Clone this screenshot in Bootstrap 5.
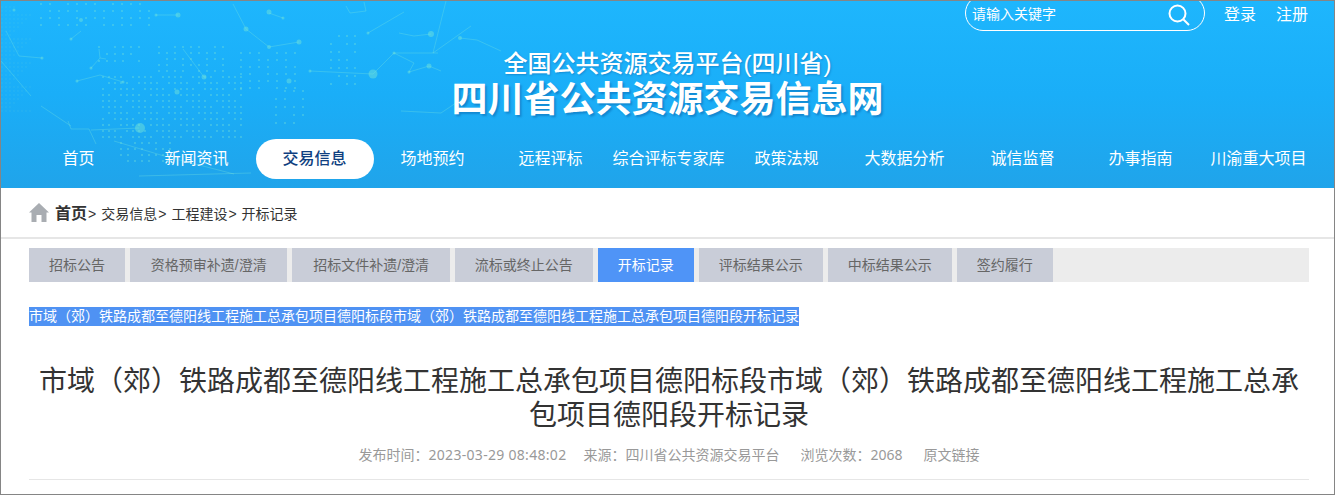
<!DOCTYPE html>
<html lang="zh-CN">
<head>
    <title>四川省公共资源交易信息网</title>
    <meta charset="utf-8">
    <meta name="viewport" content="width=device-width, initial-scale=1.0">
    <link href="https://cdn.jsdelivr.net/npm/bootstrap@5.3.0/dist/css/bootstrap.min.css" rel="stylesheet">
    <style>
        body {
            font-family: "Liberation Sans", "Noto Sans CJK SC", sans-serif;
            font-size: 14px;
            color: #333;
            background: #fff;
        }
        .page-frame {
            height: 495px;
            overflow: hidden;
            border: 1px solid #858585;
        }
        .site-head {
            position: relative;
            height: 187px;
            overflow: hidden;
            background: linear-gradient(180deg, #1eb6fd 0%, #1aaef8 50%, #20a4ea 100%);
            color: #fff;
        }
        .head-art {
            position: absolute;
            top: 0;
            left: 0;
        }
        .head-inner {
            position: relative;
        }
        .top-tools {
            height: 47px;
            padding-right: 26px;
        }
        .search-pill {
            width: 240px;
            height: 36px;
            margin-top: -6px;
            padding: 3px 14px 0 6px;
            border: 1px solid #fff;
            border-radius: 18px;
        }
        .top-link {
            color: #fff;
            font-size: 16px;
            line-height: 28px;
            text-decoration: none;
        }
        .login-link {
            margin-left: 19px;
        }
        .reg-link {
            margin-left: 20px;
        }
        .title-sub {
            font-size: 24px;
            line-height: 32px;
            font-weight: 500;
            text-shadow: 1px 1px 2px rgba(0, 70, 140, .35);
        }
        .title-main {
            font-size: 36px;
            line-height: 40px;
            font-weight: 700;
            text-shadow: 2px 2px 2px rgba(0, 70, 140, .35);
        }
        .main-nav {
            margin-top: 19px;
            padding-left: 19px;
        }
        .nav-entry {
            display: block;
            width: 118px;
            height: 40px;
            padding-right: 1px;
            line-height: 40px;
            text-align: center;
            font-size: 16px;
            color: #fff;
            text-decoration: none;
            white-space: nowrap;
            border-radius: 20px;
        }
        .nav-entry.is-on {
            background: #fff;
            color: #0f3f80;
            font-weight: 500;
        }
        .crumbs {
            height: 51px;
            padding: 3px 0 0 28px;
            border-bottom: 2px solid #e6e6e6;
            font-size: 14px;
            color: #333;
        }
        .crumbs svg {
            margin-bottom: 3px;
        }
        .crumbs a {
            color: #333;
            text-decoration: none;
        }
        .crumbs .crumb-home {
            margin-left: 6px;
            font-size: 16px;
            font-weight: 700;
        }
        .crumb-sep {
            margin: 0 5px 0 1px;
        }
        .content-wrap {
            padding: 0 25px 0 28px;
        }
        .tab-strip {
            margin-top: 9px;
            height: 34px;
            background: #ececec;
            gap: 5px;
        }
        .tab-entry {
            padding: 0 20px;
            line-height: 34px;
            background: #c9cdd8;
            color: #666;
            text-decoration: none;
        }
        .tab-entry.has-slash {
            padding: 0 20.75px;
        }
        .tab-entry.is-on {
            background: #4f94f7;
            color: #fff;
        }
        .picked-line {
            margin: 25px 0 0;
            line-height: 19px;
            white-space: nowrap;
        }
        .picked-line span {
            display: inline-block;
            background: #4f92f3;
            color: #fff;
        }
        .doc-title {
            margin: 39px 0 0;
            font-size: 28px;
            line-height: 34px;
            font-weight: 400;
            text-align: center;
            color: #333;
        }
        .doc-meta {
            margin-top: 9px;
            padding-bottom: 11px;
            line-height: 26px;
            gap: 21px;
            color: #999;
            border-bottom: 1px solid #e6e6e6;
        }
        .doc-meta a {
            color: #999;
            text-decoration: none;
        }
        .meta-num {
            font-family: "Noto Sans", sans-serif;
        }
        .meta-date {
            margin-right: -4px;
        }
        .meta-date .meta-num {
            letter-spacing: .3px;
        }
    </style>
</head>
<body>
    <div class="page-frame">
        <header class="site-head">
            <svg id="headArt" class="head-art" width="1333" height="187" viewBox="0 0 1333 187" fill="none" aria-hidden="true"></svg>
            <div class="head-inner">
                <div class="top-tools d-flex justify-content-end align-items-start">
                    <div class="search-pill d-flex justify-content-between align-items-center">
                        <span>请输入关键字</span>
                        <svg width="22" height="22" viewBox="0 0 22 22" fill="none" stroke="#fff">
                            <circle cx="9.5" cy="9.5" r="8" stroke-width="2"/>
                            <path d="M15.5 15.5 L21 21" stroke-width="2"/>
                        </svg>
                    </div>
                    <a class="top-link login-link" href="#">登录</a>
                    <a class="top-link reg-link" href="#">注册</a>
                </div>
                <div class="text-center">
                    <div class="title-sub">全国公共资源交易平台(四川省)</div>
                    <div class="title-main">四川省公共资源交易信息网</div>
                </div>
                <nav class="main-nav d-flex">
                    <a class="nav-entry" href="#">首页</a>
                    <a class="nav-entry" href="#">新闻资讯</a>
                    <a class="nav-entry is-on" href="#">交易信息</a>
                    <a class="nav-entry" href="#">场地预约</a>
                    <a class="nav-entry" href="#">远程评标</a>
                    <a class="nav-entry" href="#">综合评标专家库</a>
                    <a class="nav-entry" href="#">政策法规</a>
                    <a class="nav-entry" href="#">大数据分析</a>
                    <a class="nav-entry" href="#">诚信监督</a>
                    <a class="nav-entry" href="#">办事指南</a>
                    <a class="nav-entry" href="#">川渝重大项目</a>
                </nav>
            </div>
        </header>

        <div class="crumbs d-flex align-items-center">
            <svg width="20" height="19" viewBox="0 0 20 19" fill="#a9adb2">
                <path d="M10 0 L20 9.5 L17.5 9.5 L17.5 19 L12.5 19 L12.5 12 L7.5 12 L7.5 19 L2.5 19 L2.5 9.5 L0 9.5 Z"/>
            </svg>
            <a class="crumb-home" href="#">首页</a><span class="crumb-sep">&gt;</span>
            <a href="#">交易信息</a><span class="crumb-sep">&gt;</span>
            <a href="#">工程建设</a><span class="crumb-sep">&gt;</span>
            <a href="#">开标记录</a>
        </div>

        <main class="content-wrap">
            <div class="tab-strip d-flex">
                <a class="tab-entry" href="#">招标公告</a>
                <a class="tab-entry has-slash" href="#">资格预审补遗/澄清</a>
                <a class="tab-entry has-slash" href="#">招标文件补遗/澄清</a>
                <a class="tab-entry" href="#">流标或终止公告</a>
                <a class="tab-entry is-on" href="#">开标记录</a>
                <a class="tab-entry" href="#">评标结果公示</a>
                <a class="tab-entry" href="#">中标结果公示</a>
                <a class="tab-entry" href="#">签约履行</a>
            </div>
            <p class="picked-line"><span>市域（郊）铁路成都至德阳线工程施工总承包项目德阳标段市域（郊）铁路成都至德阳线工程施工总承包项目德阳段开标记录</span></p>
            <h1 class="doc-title">市域（郊）铁路成都至德阳线工程施工总承包项目德阳标段市域（郊）铁路成都至德阳线工程施工总承包项目德阳段开标记录</h1>
            <div class="doc-meta d-flex justify-content-center">
                <span class="meta-date">发布时间：<span class="meta-num">2023-03-29 08:48:02</span></span>
                <span>来源：四川省公共资源交易平台</span>
                <span>浏览次数：<span class="meta-num">2068</span></span>
                <a href="#">原文链接</a>
            </div>
        </main>
    </div>

    <script src="https://cdn.jsdelivr.net/npm/bootstrap@5.3.0/dist/js/bootstrap.bundle.min.js"></script>
    <script>
        // background star map of the header
        const lines = [
            [[232,3],[245,28],[268,46],[298,41]], [[268,12],[282,17]], [[155,14],[177,14]],
            [[367,32],[403,11]], [[398,32],[413,35],[430,33]], [[445,0],[432,52],[470,25]],
            [[309,70],[372,73],[393,52],[437,52]], [[393,52],[413,62],[408,71],[428,65],[440,70]],
            [[76,80],[99,74],[122,81]], [[182,48],[203,76]], [[70,38],[80,30]],
            [[90,67],[99,57],[98,48]], [[99,57],[105,58]], [[18,55],[41,57]], [[5,30],[18,55]],
            [[138,127],[90,129]], [[67,120],[70,128],[88,128],[95,143]],
            [[113,140],[163,155],[233,173]], [[40,105],[70,125]], [[138,175],[250,172]],
            [[400,110],[440,112],[480,85]], [[0,60],[30,95]], [[345,5],[349,12],[365,10],[363,1]],
            [[459,37],[476,39],[500,50]]
        ];
        const nodes = [
            [245,28,2.5],[268,46,2],[298,41,2.5],[268,11,2.5],[282,17,1.5],[177,14,2.5],[155,14,1.5],
            [372,73,4.5],[309,70,1.5],[393,52,1.5],[430,33,3],[367,32,1.5],[80,19,2],[41,57,1.5],
            [76,80,1.5],[122,81,1.5],[203,76,2.5],[139,127,5],[70,38,1.5],[90,67,1.5],[288,80,2.5],
            [428,65,2.5],[408,71,1.5],[176,91,2.5],[13,9,1.5],[459,37,2]
        ];
        // dotted patches: x0, x1, y0, y1, step x, step y
        const patches = [
            [40,150,3,30,9,7], [98,145,46,66,8,7], [158,225,46,72,8,6], [240,300,52,90,9,7],
            [102,240,76,140,6,6], [120,175,142,165,7,6], [330,355,35,85,8,8], [275,305,90,125,9,8]
        ];
        const art = document.getElementById('headArt');
        let out = '';
        lines.forEach(function (pts) {
            out += '<polyline points="' + pts.join(' ') + '" stroke="#7fe8dc" stroke-opacity=".3"/>';
        });
        nodes.forEach(function (n) {
            out += '<circle cx="' + n[0] + '" cy="' + n[1] + '" r="' + n[2] + '" fill="#78e6d8" fill-opacity=".45"/>';
        });
        patches.forEach(function (p) {
            for (let y = p[2]; y <= p[3]; y += p[5]) {
                for (let x = p[0]; x <= p[1]; x += p[4]) {
                    // skip some points so the patch edges look scattered
                    if ((x * 7 + y * 13) % 5 === 0) continue;
                    out += '<circle cx="' + x + '" cy="' + y + '" r=".9" fill="#78e6d8" fill-opacity=".5"/>';
                }
            }
        });
        // short dashes on the far left edge
        for (let y = 6; y < 112; y += 4) {
            const len = 10 + (y * 17) % 24;
            out += '<path d="M0 ' + y + ' H' + len + '" stroke="#7fe8dc" stroke-opacity=".14" stroke-dasharray="2 2"/>';
        }
        art.innerHTML = out;
    </script>
</body>
</html>
